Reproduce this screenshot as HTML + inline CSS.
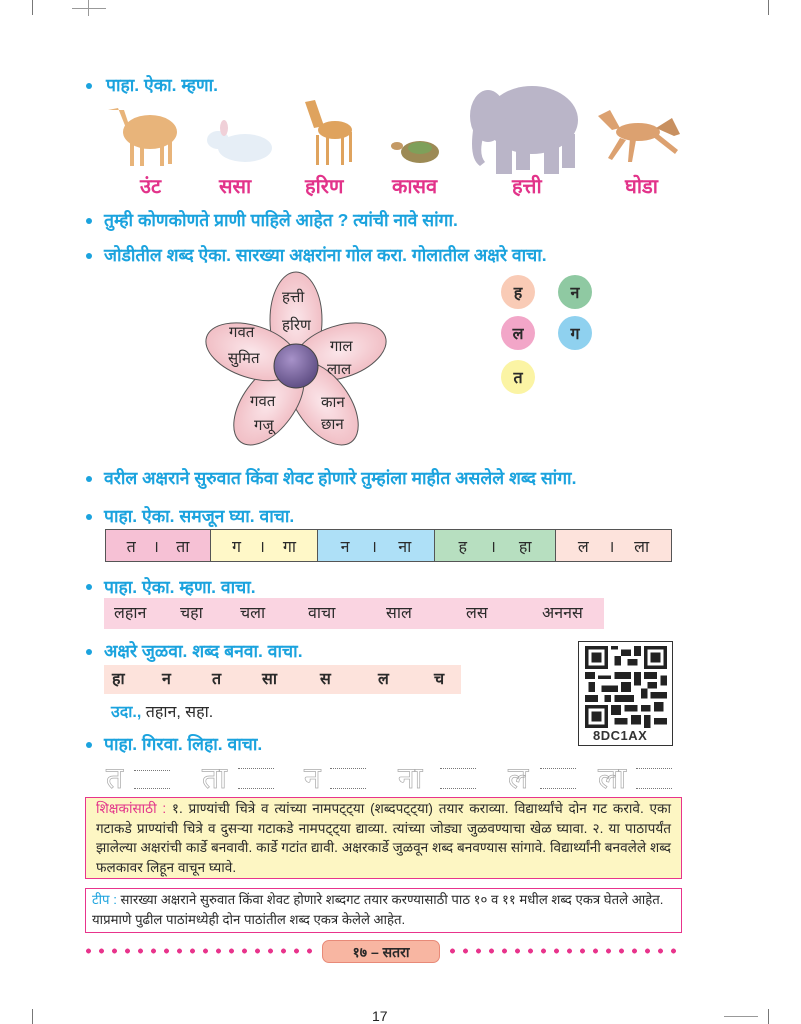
<!DOCTYPE html>
<html><head><meta charset="utf-8">
<style>
*{margin:0;padding:0;box-sizing:border-box}
body{width:801px;height:1024px;background:#fff;position:relative;overflow:hidden;font-family:"Liberation Sans","Noto Sans CJK JP",sans-serif;color:#2a2a2a}
.a{position:absolute;white-space:nowrap}
.h{color:#1ba3de;font-weight:bold;font-size:17.5px}
.dot{position:absolute;width:6px;height:6px;border-radius:50%;background:#1ba3de}
.pk{color:#e2338a;font-weight:bold;font-size:20px}
.cell{position:absolute;top:529px;height:33px;border:1.5px solid #555;font-size:16px;display:flex;align-items:center;justify-content:space-around;padding:0 12px}
.c{position:absolute;width:34px;height:34px;border-radius:50%;font-weight:bold;font-size:16px;display:flex;align-items:center;justify-content:center}
.tr{position:absolute;top:756px;font-size:30px;color:#fff;-webkit-text-stroke:0.7px #aaa}
.dl{position:absolute;width:36px;border-top:1px dotted #777}
.fl{position:absolute;font-size:15px}
</style></head><body>
<div class="a" style="left:32px;top:0;width:1px;height:15px;background:#777"></div>
<div class="a" style="left:72px;top:8px;width:34px;height:1px;background:#999"></div>
<div class="a" style="left:88px;top:0;width:1px;height:16px;background:#999"></div>
<div class="a" style="left:768px;top:0;width:1px;height:15px;background:#777"></div>
<div class="a" style="left:32px;top:1009px;width:1px;height:15px;background:#777"></div>
<div class="a" style="left:768px;top:1009px;width:1px;height:15px;background:#777"></div>
<div class="a" style="left:724px;top:1016px;width:34px;height:1px;background:#999"></div>

<div class="dot" style="left:86px;top:83px"></div>
<div class="a h" style="left:106px;top:73px">पाहा. ऐका. म्हणा.</div>

<svg class="a" style="left:100px;top:80px" width="590" height="95">
 <g fill="#e8b47a"><ellipse cx="50" cy="52" rx="27" ry="17"/><path d="M8 30 L18 28 L26 48 L30 48 L24 30 Z"/><rect x="30" y="60" width="4" height="26"/><rect x="40" y="62" width="4" height="24"/><rect x="60" y="60" width="4" height="26"/><rect x="68" y="58" width="4" height="26"/></g>
 <g fill="#e6eef6"><ellipse cx="145" cy="68" rx="27" ry="14"/><ellipse cx="118" cy="60" rx="11" ry="9"/><ellipse cx="124" cy="48" rx="4" ry="8" fill="#f0d0d8"/></g>
 <g fill="#dfa35e"><ellipse cx="235" cy="50" rx="17" ry="9"/><path d="M205 22 L215 20 L224 46 L214 48 Z"/><rect x="216" y="55" width="3" height="30"/><rect x="226" y="55" width="3" height="30"/><rect x="241" y="55" width="3" height="30"/><rect x="249" y="52" width="3" height="30"/></g>
 <g><ellipse cx="320" cy="72" rx="19" ry="11" fill="#9c8a55"/><ellipse cx="297" cy="66" rx="6" ry="4" fill="#c49a65"/><ellipse cx="320" cy="68" rx="12" ry="6" fill="#7ea05a"/></g>
 <g fill="#bab5c8"><ellipse cx="432" cy="40" rx="46" ry="34"/><ellipse cx="388" cy="36" rx="18" ry="26"/><path d="M374 44 Q368 78 380 86 L385 82 Q378 74 384 54 Z"/><rect x="396" y="56" width="16" height="38"/><rect x="416" y="58" width="14" height="32"/><rect x="444" y="58" width="15" height="36"/><rect x="462" y="54" width="13" height="34"/></g>
 <g fill="#dca170"><ellipse cx="538" cy="52" rx="22" ry="9"/><path d="M498 36 L510 30 L520 48 L512 50 Z"/><path d="M520 58 L508 78 L512 80 L526 60 Z"/><path d="M530 58 L528 82 L532 82 L536 60 Z"/><path d="M552 56 L575 74 L578 70 L558 54 Z"/><path d="M556 48 L572 38 L580 54 L574 56 Z" fill="#c89060"/></g>
</svg>
<div class="a pk" style="left:140px;top:172px">उंट</div>
<div class="a pk" style="left:219px;top:172px">ससा</div>
<div class="a pk" style="left:305px;top:172px">हरिण</div>
<div class="a pk" style="left:392px;top:172px">कासव</div>
<div class="a pk" style="left:512px;top:172px">हत्ती</div>
<div class="a pk" style="left:625px;top:172px">घोडा</div>

<div class="dot" style="left:86px;top:218px"></div>
<div class="a h" style="left:104px;top:208px">तुम्ही कोणकोणते प्राणी पाहिले आहेत ? त्यांची नावे सांगा.</div>
<div class="dot" style="left:86px;top:253px"></div>
<div class="a h" style="left:104px;top:243px">जोडीतील शब्द ऐका. सारख्या अक्षरांना गोल करा. गोलातील अक्षरे वाचा.</div>

<svg class="a" style="left:0;top:0" width="801" height="460">
 <defs><radialGradient id="pg" cx="50%" cy="50%" r="60%"><stop offset="0" stop-color="#fbe6ea"/><stop offset="1" stop-color="#efb7be"/></radialGradient>
 <radialGradient id="cg" cx="40%" cy="35%" r="70%"><stop offset="0" stop-color="#a792c9"/><stop offset="1" stop-color="#5b4a80"/></radialGradient></defs>
 <g fill="url(#pg)" stroke="#555" stroke-width="1">
  <ellipse cx="296" cy="320" rx="26" ry="48" transform="rotate(0 296 366)"/>
  <ellipse cx="296" cy="320" rx="26" ry="48" transform="rotate(72 296 366)"/>
  <ellipse cx="296" cy="320" rx="26" ry="48" transform="rotate(144 296 366)"/>
  <ellipse cx="296" cy="320" rx="26" ry="48" transform="rotate(216 296 366)"/>
  <ellipse cx="296" cy="320" rx="26" ry="48" transform="rotate(288 296 366)"/>
 </g>
 <circle cx="296" cy="366" r="22" fill="url(#cg)" stroke="#444"/>
</svg>
<div class="fl" style="left:282px;top:287px">हत्ती</div>
<div class="fl" style="left:282px;top:315px">हरिण</div>
<div class="fl" style="left:229px;top:322px">गवत</div>
<div class="fl" style="left:228px;top:348px">सुमित</div>
<div class="fl" style="left:330px;top:336px">गाल</div>
<div class="fl" style="left:327px;top:359px">लाल</div>
<div class="fl" style="left:250px;top:391px">गवत</div>
<div class="fl" style="left:254px;top:415px">गजू</div>
<div class="fl" style="left:321px;top:392px">कान</div>
<div class="fl" style="left:321px;top:414px">छान</div>

<div class="c" style="left:501px;top:275px;background:#f9cbb6">ह</div>
<div class="c" style="left:558px;top:275px;background:#8fc9a2">न</div>
<div class="c" style="left:501px;top:316px;background:#f2a6c8">ल</div>
<div class="c" style="left:558px;top:316px;background:#8fd1ef">ग</div>
<div class="c" style="left:501px;top:360px;background:#fbf4a4">त</div>

<div class="dot" style="left:86px;top:476px"></div>
<div class="a h" style="left:104px;top:466px">वरील अक्षराने सुरुवात किंवा शेवट होणारे तुम्हांला माहीत असलेले शब्द सांगा.</div>

<div class="dot" style="left:86px;top:514px"></div>
<div class="a h" style="left:104px;top:504px">पाहा. ऐका. समजून घ्या. वाचा.</div>
<div class="cell" style="left:105px;width:106px;background:#f6c1d5">त<span>।</span>ता</div>
<div class="cell" style="left:210px;width:108px;background:#fff8c8">ग<span>।</span>गा</div>
<div class="cell" style="left:317px;width:118px;background:#aee0f7">न<span>।</span>ना</div>
<div class="cell" style="left:434px;width:122px;background:#b7dfc0">ह<span>।</span>हा</div>
<div class="cell" style="left:555px;width:117px;background:#fde3dc">ल<span>।</span>ला</div>

<div class="dot" style="left:86px;top:584px"></div>
<div class="a h" style="left:104px;top:575px">पाहा. ऐका. म्हणा. वाचा.</div>
<div class="a" style="left:104px;top:598px;width:500px;height:31px;background:#fad4e1;font-size:16px;line-height:31px">
 <span class="a" style="left:10px">लहान</span><span class="a" style="left:76px">चहा</span><span class="a" style="left:136px">चला</span><span class="a" style="left:204px">वाचा</span><span class="a" style="left:282px">साल</span><span class="a" style="left:362px">लस</span><span class="a" style="left:438px">अननस</span></div>

<div class="dot" style="left:86px;top:649px"></div>
<div class="a h" style="left:104px;top:639px">अक्षरे जुळवा. शब्द बनवा. वाचा.</div>
<div class="a" style="left:104px;top:665px;width:357px;height:29px;background:#fde3dc;font-size:16px;font-weight:bold;line-height:29px">
 <span class="a" style="left:8px">हा</span><span class="a" style="left:58px">न</span><span class="a" style="left:108px">त</span><span class="a" style="left:158px">सा</span><span class="a" style="left:216px">स</span><span class="a" style="left:274px">ल</span><span class="a" style="left:330px">च</span></div>
<div class="a" style="left:111px;top:700px;font-size:16px"><span style="color:#1ba3de;font-weight:bold">उदा.,</span> तहान, सहा.</div>

<div class="a" style="left:578px;top:641px;width:95px;height:105px;border:1.5px solid #333;background:#fff"></div>
<svg class="a" style="left:584px;top:646px" width="84" height="82" viewBox="0 0 25 25" shape-rendering="crispEdges">
 <g fill="#222">
 <path d="M0 0h7v7h-7zM1 1v5h5v-5zM2 2h3v3h-3z" fill-rule="evenodd"/>
 <path d="M18 0h7v7h-7zM19 1v5h5v-5zM20 2h3v3h-3z" fill-rule="evenodd"/>
 <path d="M0 18h7v7h-7zM1 19v5h5v-5zM2 20h3v3h-3z" fill-rule="evenodd"/>
 <rect x="8" y="0" width="2" height="1"/><rect x="11" y="1" width="3" height="2"/><rect x="15" y="0" width="2" height="3"/><rect x="9" y="3" width="2" height="3"/><rect x="13" y="4" width="3" height="2"/>
 <rect x="0" y="8" width="3" height="2"/><rect x="4" y="9" width="4" height="1"/><rect x="9" y="8" width="5" height="2"/><rect x="15" y="8" width="2" height="4"/><rect x="18" y="8" width="4" height="2"/><rect x="23" y="9" width="2" height="3"/>
 <rect x="1" y="11" width="2" height="3"/><rect x="5" y="12" width="5" height="2"/><rect x="11" y="11" width="3" height="3"/><rect x="19" y="11" width="3" height="2"/><rect x="17" y="13" width="2" height="3"/>
 <rect x="0" y="15" width="4" height="2"/><rect x="6" y="15" width="2" height="2"/><rect x="9" y="15" width="6" height="2"/><rect x="20" y="14" width="5" height="2"/><rect x="21" y="17" width="3" height="3"/>
 <rect x="8" y="18" width="3" height="3"/><rect x="12" y="18" width="4" height="2"/><rect x="17" y="18" width="3" height="2"/><rect x="9" y="22" width="4" height="2"/><rect x="14" y="21" width="3" height="3"/><rect x="18" y="21" width="2" height="4"/><rect x="21" y="22" width="4" height="2"/>
 </g></svg>
<div class="a" style="left:593px;top:728px;font-size:13px;font-weight:bold;color:#333;letter-spacing:0.5px">8DC1AX</div>

<div class="dot" style="left:86px;top:742px"></div>
<div class="a h" style="left:104px;top:732px">पाहा. गिरवा. लिहा. वाचा.</div>
<div class="tr" style="left:106px">त</div><div class="tr" style="left:202px">ता</div><div class="tr" style="left:304px">न</div><div class="tr" style="left:398px">ना</div><div class="tr" style="left:508px">ल</div><div class="tr" style="left:598px">ला</div>
<div class="dl" style="left:134px;top:770px"></div><div class="dl" style="left:134px;top:788px"></div>
<div class="dl" style="left:238px;top:768px"></div><div class="dl" style="left:238px;top:788px"></div>
<div class="dl" style="left:330px;top:768px"></div><div class="dl" style="left:330px;top:788px"></div>
<div class="dl" style="left:440px;top:768px"></div><div class="dl" style="left:440px;top:788px"></div>
<div class="dl" style="left:540px;top:768px"></div><div class="dl" style="left:540px;top:788px"></div>
<div class="dl" style="left:636px;top:768px"></div><div class="dl" style="left:636px;top:788px"></div>

<div class="a" style="left:85px;top:797px;width:597px;height:82px;background:#fdf6c3;border:1.5px solid #e8348c;font-size:13.6px;line-height:19.5px;padding:1px 10px;white-space:normal;text-align:justify">
<span style="color:#e2338a">शिक्षकांसाठी :</span> १. प्राण्यांची चित्रे व त्यांच्या नामपट्ट्या (शब्दपट्ट्या) तयार कराव्या. विद्यार्थ्यांचे दोन गट करावे. एका गटाकडे प्राण्यांची चित्रे व दुसऱ्या गटाकडे नामपट्ट्या द्याव्या. त्यांच्या जोड्या जुळवण्याचा खेळ घ्यावा. २. या पाठापर्यंत झालेल्या अक्षरांची कार्डे बनवावी. कार्डे गटांत द्यावी. अक्षरकार्डे जुळवून शब्द बनवण्यास सांगावे. विद्यार्थ्यांनी बनवलेले शब्द फलकावर लिहून वाचून घ्यावे.</div>

<div class="a" style="left:85px;top:888px;width:597px;height:45px;background:#fff;border:1.5px solid #e8348c;font-size:13.2px;line-height:20px;padding:1px 6px;white-space:normal">
<span style="color:#1ba3de">टीप :</span> सारख्या अक्षराने सुरुवात किंवा शेवट होणारे शब्दगट तयार करण्यासाठी पाठ १० व ११ मधील शब्द एकत्र घेतले आहेत. याप्रमाणे पुढील पाठांमध्येही दोन पाठांतील शब्द एकत्र केलेले आहेत.</div>

<div class="a" style="left:82px;top:948px;width:236px;height:6px;background:radial-gradient(circle,#e8348c 2.3px,transparent 2.6px) 0 0/13px 6px"></div>
<div class="a" style="left:446px;top:948px;width:236px;height:6px;background:radial-gradient(circle,#e8348c 2.3px,transparent 2.6px) 0 0/13px 6px"></div>
<div class="a" style="left:322px;top:940px;width:118px;height:23px;background:#f8b6a2;border:1px solid #e88a78;border-radius:7px;font-size:14px;font-weight:bold;text-align:center;line-height:22px">१७ – सतरा</div>

<div class="a" style="left:372px;top:1008px;font-size:14px;color:#222">17</div>
</body></html>
